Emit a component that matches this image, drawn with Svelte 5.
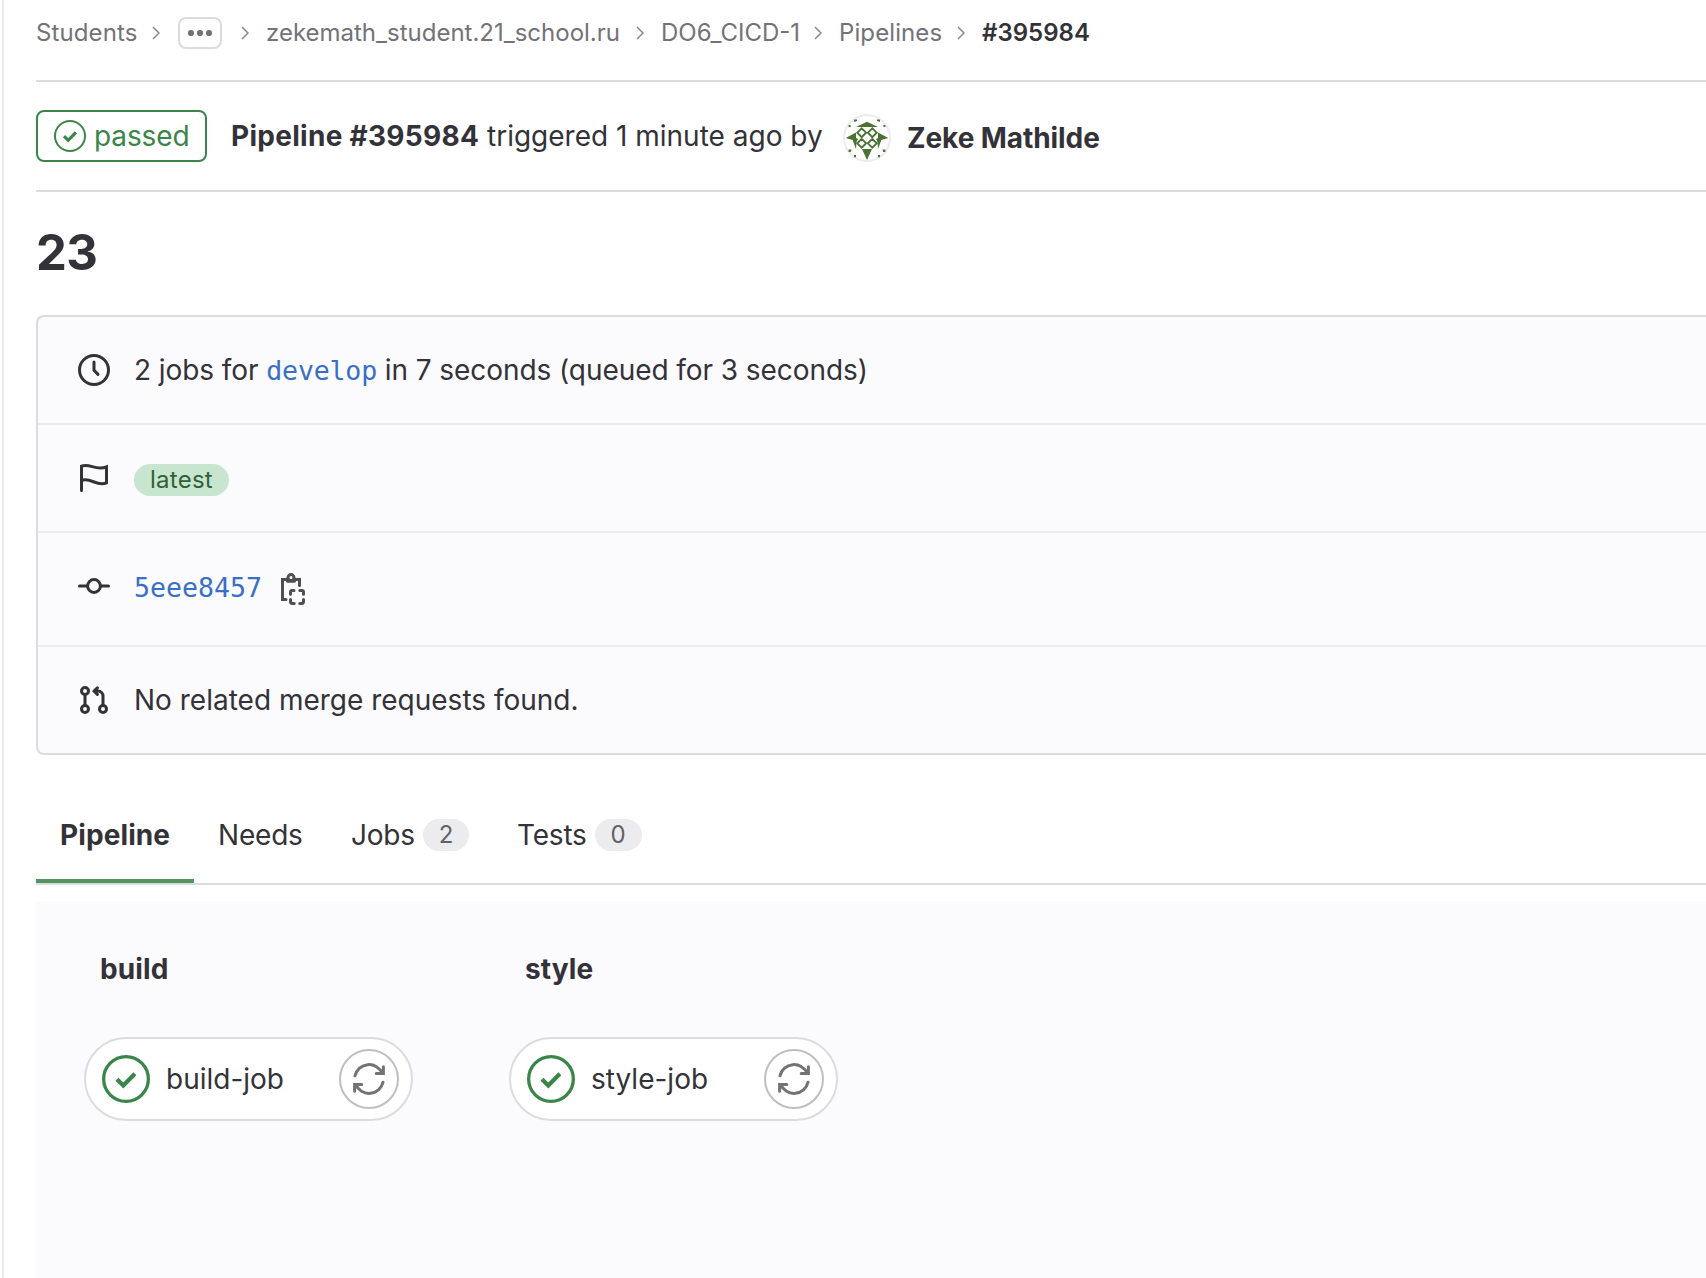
<script>
  const stages = [
    { name: 'build', job: 'build-job' },
    { name: 'style', job: 'style-job' }
  ];
</script>

{#snippet chevron()}
  <svg class="chevron" viewBox="0 0 8 14"><path d="M1 1l6 6-6 6" /></svg>
{/snippet}

{#snippet check(size, ring, tick)}
  <svg class="check" width={size} height={size} viewBox="0 0 48 48">
    <circle cx="24" cy="24" r={24 - ring / 2} stroke-width={ring} />
    <path d="M15 24.3l6.3 6.2 11.6-11.8" stroke-width={tick} />
  </svg>
{/snippet}

<div class="page">
  <nav class="crumbs">
    <span class="c1">Students</span>
    {@render chevron()}
    <button class="more" aria-label="Show more">
      <svg width="26" height="8" viewBox="0 0 26 8"><circle cx="4" cy="4" r="3.1" /><circle cx="13" cy="4" r="3.1" /><circle cx="22" cy="4" r="3.1" /></svg>
    </button>
    {@render chevron()}
    <span class="c2">zekemath_student.21_school.ru</span>
    {@render chevron()}
    <span class="c3">DO6_CICD-1</span>
    {@render chevron()}
    <span class="c4">Pipelines</span>
    {@render chevron()}
    <b class="c5">#395984</b>
  </nav>

  <header>
    <span class="status">{@render check(32, 3, 4.8)}<span>passed</span></span>
    <b class="id">Pipeline #395984</b>
    <span class="when">triggered 1 minute ago by</span>
    <svg class="avatar" width="48" height="48" viewBox="0 0 48 48">
      <circle cx="24" cy="24" r="23" fill="#fff" stroke="#ececef" stroke-width="2" />
      <g fill="#4a7330">
        <path d="M24 7.7L35 13H13zM19 35h10l-5 11zM2.7 24L13 18.6V35L9.6 26zM45.3 24L35 18.6V35l3.4-9z" />
        <path d="M13 24l2 1-1.5 3-.5 7zM35 24l-2 1 1.5 3 .5 7z" />
        <path d="M11 5.5h3v1.5l-3 1zM37 5.5h-3v1.5l3 1zM5.6 11h2v2h-2zM40.4 11h2v2h-2zM5.6 35.5h3l-1 2.5h-2zM42.4 35.5h-3l1 2.5h2zM11 41h2v2.2h-2zM35 41h2v2.2h-2z" />
      </g>
      <path fill="none" stroke="#4a7330" stroke-width="1.9" d="M18.7 14.3l4.4 4.4-4.4 4.4-4.4-4.4zM29.3 14.3l4.4 4.4-4.4 4.4-4.4-4.4zM18.7 24.9l4.4 4.4-4.4 4.4-4.4-4.4zM29.3 24.9l4.4 4.4-4.4 4.4-4.4-4.4z" />
    </svg>
    <b class="user">Zeke Mathilde</b>
  </header>

  <h1>23</h1>

  <section class="info">
    <div class="row">
      <svg class="icon" viewBox="0 0 16 16"><circle cx="8" cy="8" r="7.25" /><path d="M8 4v4.1l2 2.1" /></svg>
      <span class="summary">2 jobs for <a class="mono" href="#develop">develop</a> in 7 seconds (queued for 3 seconds)</span>
    </div>
    <div class="row">
      <svg class="icon" viewBox="0 0 16 16"><path d="M1.75 14.25V2.1C5.7.4 9 4.6 14.25 2.4v8C9.6 12.6 6 7.3 1.75 9.3" /></svg>
      <span class="latest">latest</span>
    </div>
    <div class="row commit">
      <svg class="icon" viewBox="0 0 16 16"><circle cx="8" cy="8" r="3.2" /><path d="M.75 8h4M11.25 8h4" /></svg>
      <a class="mono" href="#commit">5eee8457</a>
      <svg class="icon copy" viewBox="0 0 16 16"><path d="M5 3.2H2.75v10.1H4.5M9 3.2h2.25v3M6.75 10.6V9.6q0-.85.85-.85h.9M11.4 8.75h1q.85 0 .85.85v1M13.25 13.3v1q0 .95-.85.95h-1M8.6 15.25h-1q-.85 0-.85-.95v-1" /><circle cx="7" cy="2.3" r="1.5" /><path d="M5.3 4.1h3.4" /></svg>
    </div>
    <div class="row">
      <svg class="icon" viewBox="0 0 16 16"><circle cx="3.5" cy="3.5" r="1.75" /><circle cx="3.5" cy="12.5" r="1.75" /><circle cx="12.5" cy="12.5" r="1.75" /><path d="M3.5 5.3v5.4M12.5 10.7V6A2.5 2.5 0 0 0 10 3.5H8M9.7 1.9L8 3.5l1.7 1.7" /></svg>
      <span>No related merge requests found.</span>
    </div>
  </section>

  <div class="tabs">
    <div class="tab active"><b>Pipeline</b></div>
    <div class="tab t2">Needs</div>
    <div class="tab t3">Jobs<span class="count">2</span></div>
    <div class="tab t4">Tests<span class="count">0</span></div>
  </div>

  <main>
    {#each stages as stage}
      <div class="stage">
        <b>{stage.name}</b>
        <div class="job">
          {@render check(48, 3.3, 4.2)}
          <span>{stage.job}</span>
          <button class="retry" aria-label="Retry">
            <svg class="icon" viewBox="0 0 16 16"><path d="M.98 6.4A7.2 7.2 0 0 1 14.63 5.2M15.2 1.9v3.4h-3.6M15.02 9.6A7.2 7.2 0 0 1 1.37 10.8M.8 14.1v-3.4h3.6" /></svg>
          </button>
        </div>
      </div>
    {/each}
  </main>
</div>

<style>
  :global(body) { background: #fff; overflow: hidden; }
  .page {
    box-sizing: border-box; width: 1706px; height: 1278px; overflow: hidden;
    margin-left: 2px; border-left: 2px solid #ececef; padding-left: 32px;
    display: flex; flex-direction: column;
    font: 28px/32px Inter, sans-serif; color: #333238; white-space: nowrap;
  }
  b { font-weight: 650; letter-spacing: 0.1px; }
  svg { flex: none; display: block; }
  button { padding: 0; box-sizing: border-box; background: #fff; display: flex; align-items: center; justify-content: center; flex: none; }
  a { color: #3970c4; text-decoration: none; }
  .mono { font: 26.6px/32px "DejaVu Sans Mono", monospace; letter-spacing: -0.02px; }

  .crumbs { box-sizing: border-box; height: 82px; flex: none; padding-bottom: 14px; border-bottom: 2px solid #dcdcde; display: flex; align-items: center; font-size: 24px; color: #737278; }
  .crumbs b { color: #333238; font-weight: 600; letter-spacing: 0; margin-left: 17px; }
  .chevron { width: 8px; height: 14px; fill: none; stroke: #89888d; stroke-width: 1.5; }
  .c1 { width: 116px; letter-spacing: 0.1px; }
  .more { width: 44px; height: 32px; margin: 0 19px 0 18px; border: 2px solid #dcdcde; border-radius: 8px; }
  .more svg { fill: #737278; }
  .c2 { width: 370px; margin-left: 17px; }
  .c3 { width: 153px; margin-left: 17px; }
  .c4 { width: 118px; margin-left: 17px; letter-spacing: 0.1px; }

  header { box-sizing: border-box; height: 110px; flex: none; border-bottom: 2px solid #dcdcde; display: flex; align-items: center; }
  .status { box-sizing: border-box; width: 171px; height: 52px; border: 2px solid #3a8549; border-radius: 8px; padding-left: 16px; display: flex; align-items: center; gap: 8px; color: #3a8549; letter-spacing: -0.1px; }
  .check { fill: none; stroke: #3a8549; }
  .id { width: 256px; margin-left: 24px; letter-spacing: 0.28px; }
  .when { width: 337px; }
  .avatar { margin: 4px 16px 0 19px; }
  .user { margin-top: 4px; letter-spacing: -0.08px; }

  h1 { margin: 36px 0 38px; height: 49px; font-size: 49px; line-height: 49px; font-weight: 700; letter-spacing: -0.6px; }

  .info { box-sizing: border-box; height: 440px; flex: none; border: 2px solid #dcdcde; border-right: 0; border-radius: 8px 0 0 8px; background: #fbfafd; }
  .row { height: 106px; padding-left: 40px; display: flex; align-items: center; gap: 24px; }
  .row + .row { border-top: 2px solid #ececef; }
  .row.commit { height: 112px; }
  .commit > .icon:first-child { margin-top: -6px; }
  .commit > .mono { margin-top: -3px; }
  .icon { width: 32px; height: 32px; fill: none; stroke: currentColor; stroke-width: 1.5; stroke-linecap: round; }
  .copy { margin-left: -9px; color: #4f4e54; }
  .summary { letter-spacing: -0.07px; }
  .summary .mono { letter-spacing: -0.2px; }
  .latest { margin-top: 4px; padding: 0 16px; border-radius: 16px; background: #c8e6cf; color: #2f6237; font-size: 24px; letter-spacing: 0.25px; }

  .tabs { box-sizing: border-box; height: 98px; flex: none; margin-top: 32px; border-bottom: 2px solid #dcdcde; display: flex; }
  .tab { box-sizing: border-box; height: 96px; padding: 0 24px; display: flex; align-items: center; letter-spacing: -0.2px; }
  .active { width: 158px; padding-top: 4px; border-bottom: 4px solid #549463; }
  .t2 { width: 133px; }
  .t3 { width: 166px; }
  .count { width: 47px; height: 32px; margin-left: 8px; border-radius: 16px; background: #ececef; color: #626168; font-size: 24px; letter-spacing: 0; text-align: center; }

  main { flex: 1; margin-top: 16px; padding: 52px 0 0 48px; background: #fbfafd; display: flex; gap: 96px; }
  .stage { width: 329px; }
  .stage b { display: block; margin-left: 16px; }
  .job { box-sizing: border-box; width: 329px; height: 84px; margin-top: 52px; padding: 0 12px 0 16px; border: 2px solid #dcdcde; border-radius: 42px; background: #fff; display: flex; align-items: center; }
  .job span { flex: 1; margin-left: 16px; }
  .retry { width: 60px; height: 60px; border: 2px solid #bfbfc3; border-radius: 50%; color: #737278; }
</style>
